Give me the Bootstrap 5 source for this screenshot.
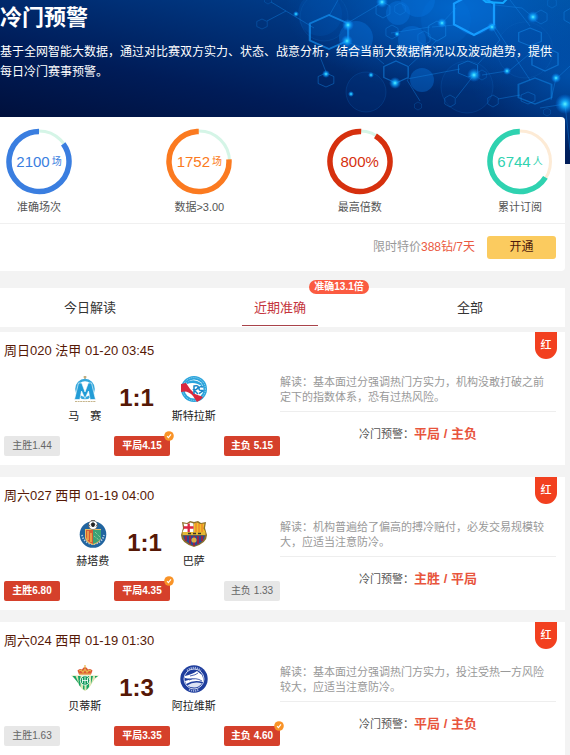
<!DOCTYPE html>
<html lang="zh-CN">
<head>
<meta charset="utf-8">
<meta name="viewport" content="width=device-width, initial-scale=1">
<title>冷门预警</title>
<link href="https://cdn.jsdelivr.net/npm/bootstrap@5.3.0/dist/css/bootstrap.min.css" rel="stylesheet">
<style>
body{background:#f3f3f3;font-family:"Liberation Sans","Noto Sans CJK SC",sans-serif;font-size:11px;line-height:15px;color:#333;overflow-x:hidden}
.hero{background:linear-gradient(12deg,#000c33 8%,#001c58 42%,#003a86 78%,#00529f);height:164px;color:#fff}
.hero-art{position:absolute;top:0;right:0;width:100%;height:100%}
.hero-body{position:relative;padding:4px 16px 0 0}
.hero h1{font-size:22px;line-height:28px;margin-bottom:10px}
.hero p{font-size:12px;line-height:20px;margin:0}
.page-body{position:relative;margin:-47px 5px 0 0}
.summary{border-radius:0 4px 4px 0}
.stats{padding:11px 11px 8px 5px;border-bottom:1px solid #f0f0f0}
.stat{width:68px}
.ring{position:relative;height:67px}
.ring svg{display:block;width:68px;height:67px}
.ring-value{position:absolute;inset:0;font-size:15px}
.ring-value small{font-size:10px;margin-left:2px}
.ring-blue{color:#3a7ee0}
.ring-orange{color:#fb7a20}
.ring-red{color:#d6300e}
.ring-green{color:#2fd2b0}
.stat-name{font-size:11px;line-height:16px;margin-top:4px;color:#555}
.offer{padding:12px 9px 12px 0;font-size:12px;color:#999;gap:12px}
.offer b{font-weight:400;color:#ea5a42}
.btn-open{background:#fbcb5f;color:#4e1a0c;font-size:12px;font-weight:400;line-height:23px;width:69px;padding:0;border:0;border-radius:3px}
.btn-open:hover{background:#f2bf4c}
.tabs{margin-top:17px;background:#fff}
.tabs .nav{margin-left:-5px}
.tabs .nav-link{position:relative;color:#333;font-size:13px;line-height:39px;padding:0}
.tabs .active{color:#c4343c}
.tabs .active::after{content:"";position:absolute;left:30%;right:30%;bottom:1px;height:1px;background:#a9434a}
.tab-tip{position:absolute;left:calc(50% + 29px);top:-8px;background:#fb5b41;color:#fff;font-size:10px;font-weight:700;line-height:14px;border-radius:7px;width:60px}
.matches{margin-top:5px;gap:12px}
.match{position:relative;background:#fff;padding:10px 9px 9px 4px}
.match h2{font-size:13px;font-weight:400;line-height:18px;margin-bottom:15px;color:#561806}
.flag{position:absolute;right:8px;top:0;width:22px;height:27px;line-height:27px;border-radius:0 0 11px 11px;background:#f2401f;color:#fff;font-weight:500}
.match-left{flex:0 0 276px}
.teams{gap:18px;margin-bottom:12px}
.team svg{display:block;width:28px;height:28px;margin:0 auto 6px}
.team{color:#222}
.score{font-size:24px;line-height:28px;font-weight:700;color:#561806;padding-top:9px}
.odd{position:relative;width:56px;border:0;border-radius:2px;background:#e7e7e7;color:#666;font-size:10px;line-height:20px;padding:0}
.odd.hit{background:#d5402b;color:#fff;font-weight:700}
.tick{position:absolute;right:-4px;top:-5px;width:10px;height:10px}
.note{color:#999;line-height:15px;padding:0 6px 6px 0;margin:0;border-bottom:1px solid #eee}
.verdict{margin:13px 0 0;line-height:18px;color:#555}
.verdict strong{font-size:13px;color:#e8553d}
</style>
</head>
<body>
<svg width="0" height="0" class="d-none" aria-hidden="true">
  <symbol id="tick" viewBox="0 0 10 10"><circle cx="5" cy="5" r="4.8" fill="#f99327"/><path d="M3 5.2l1.4 1.4L7 3.4" fill="none" stroke="#fff" stroke-width="1.1"/></symbol>
</svg>

<header class="hero position-relative overflow-hidden">
  <svg class="hero-art" viewBox="0 0 570 164" preserveAspectRatio="xMaxYMin slice" aria-hidden="true">
    <defs>
      <radialGradient id="glow"><stop offset="0" stop-color="#5ff4ff"/><stop offset=".3" stop-color="#16b5ff" stop-opacity=".9"/><stop offset="1" stop-color="#007bff" stop-opacity="0"/></radialGradient>
      <radialGradient id="haze"><stop offset="0" stop-color="#0068d0" stop-opacity=".85"/><stop offset="1" stop-color="#0058c0" stop-opacity="0"/></radialGradient>
      <path id="hex" d="M0-10L8.700-5V5L0 10L-8.700 5V-5Z"/>
    </defs>
    <ellipse cx="455" cy="8" rx="170" ry="84" fill="url(#haze)"/>
    <ellipse cx="570" cy="75" rx="100" ry="75" fill="url(#haze)" opacity=".6"/>
    <g fill="#0875e0" fill-opacity=".4">
      <circle cx="356" cy="38" r="17"/><circle cx="412" cy="40" r="14"/><circle cx="422" cy="80" r="12"/><circle cx="398" cy="13" r="12"/><circle cx="474" cy="15" r="20"/><circle cx="446" cy="20" r="25" fill-opacity=".16"/>
      <circle cx="320" cy="14" r="22" fill-opacity=".15"/><circle cx="418" cy="0" r="17"/>
    </g>
    <g fill="#004cad" fill-opacity=".14" stroke="#1069c0" stroke-opacity=".25"><circle cx="467" cy="87" r="26"/><circle cx="366" cy="92" r="20"/><circle cx="324" cy="17" r="24"/><circle cx="525" cy="50" r="28"/></g>
    <g fill="none" stroke="#1487e8" stroke-width="1" stroke-opacity=".55">
      <use href="#hex" transform="translate(383 10) scale(.8)"/><use href="#hex" transform="translate(400 9) scale(.6)"/><use href="#hex" transform="translate(392 32) scale(.7)"/><use href="#hex" transform="translate(437 31)"/><use href="#hex" transform="translate(424 38) scale(.7)"/>
      <use href="#hex" transform="translate(396 72) scale(1.4 1.1)"/><use href="#hex" transform="translate(326 80) scale(.9 .7)"/><use href="#hex" transform="translate(530 37) scale(1.3 .9)"/><use href="#hex" transform="translate(541 17) scale(.7)"/><use href="#hex" transform="translate(468 69) scale(1.100 .8)"/><use href="#hex" transform="translate(482 75) scale(.5)"/>
      <use href="#hex" transform="translate(528 98) scale(.8 .6)"/><use href="#hex" transform="translate(450 101) scale(.6)"/><use href="#hex" transform="translate(493 101) scale(.6)"/><use href="#hex" transform="translate(547 112) scale(.4)"/><use href="#hex" transform="translate(418 106) scale(.4)"/><use href="#hex" transform="translate(262 24) scale(.6 .5)"/><use href="#hex" transform="translate(268 0) scale(.4)"/><use href="#hex" transform="translate(545 59) scale(1.5 1.200)"/><use href="#hex" transform="translate(571 16) scale(.8)"/><use href="#hex" transform="translate(552 3) scale(.5)"/>
      <path stroke-opacity=".4" d="M267 21L286 11L271 2M286 11L314 28M329 16L338 0M346 24L383 2M347 42L366 49L384 64M315 44L326 72M391 33L430 27M442 23L456 8M492 27L500 40L478 64M495 5L522 8L533 17M510 0L530 26M409 66L436 41M455 25L432 27M407 79L460 69M509 71L540 45M556 78L551 100M520 95L498 99M482 75L507 71M555 80L570 66M495 27L530 80M456 98L474 75M420 101L407 80M540 108L565 104L570 150"/>
    </g>
    <g fill="none" stroke="#159cff" stroke-width="1"><use href="#hex" transform="translate(474 14) scale(2.300 2.100)"/><use href="#hex" transform="translate(329 32) scale(2.200 1.700)" stroke-opacity=".6"/><use href="#hex" transform="translate(535 91) scale(1.900 1.300)" stroke-opacity=".4"/></g>
    <path d="M474-8L486 2L503 3L509-3" stroke="#12a8ff" stroke-width="2" fill="none"/>
    <g fill="url(#glow)">
      <circle cx="348" cy="25" r="6"/><circle cx="347" cy="41" r="6"/><circle cx="382" cy="2" r="6"/><circle cx="442" cy="23" r="5"/><circle cx="492" cy="27" r="5"/><circle cx="533" cy="17" r="6"/><circle cx="326" cy="74" r="4"/><circle cx="371" cy="75" r="3"/><circle cx="351" cy="94" r="3"/><circle cx="395" cy="83" r="6"/><circle cx="474" cy="75" r="7"/><circle cx="507" cy="71" r="4"/><circle cx="556" cy="78" r="5"/><circle cx="565" cy="104" r="10"/><circle cx="397" cy="34" r="3"/><circle cx="296" cy="14" r="3"/>
    </g>
  </svg>
  <div class="hero-body">
    <h1 class="fw-bold">冷门预警</h1>
    <p>基于全网智能大数据，通过对比赛双方实力、状态、战意分析，结合当前大数据情况以及波动趋势，提供每日冷门赛事预警。</p>
  </div>
</header>

<main class="page-body">
  <section class="summary bg-white">
    <div class="stats d-flex justify-content-between text-center">
      <div class="stat">
        <div class="ring ring-blue"><svg viewBox="0 0 68 67"><circle cx="34" cy="33.500" r="30.500" fill="none" stroke="#d5f5e7" stroke-width="3"/><circle cx="34" cy="33.500" r="30" fill="none" stroke="currentColor" stroke-width="5.500" pathLength="100" stroke-dasharray="85 15" transform="rotate(-36 34 33.500)"/></svg><div class="ring-value d-flex align-items-center justify-content-center">2100<small>场</small></div></div>
        <div class="stat-name">准确场次</div>
      </div>
      <div class="stat">
        <div class="ring ring-orange"><svg viewBox="0 0 68 67"><circle cx="34" cy="33.500" r="30.500" fill="none" stroke="#d5f5e7" stroke-width="3"/><circle cx="34" cy="33.500" r="30" fill="none" stroke="currentColor" stroke-width="5.500" pathLength="100" stroke-dasharray="76 24" transform="rotate(-4 34 33.500)"/></svg><div class="ring-value d-flex align-items-center justify-content-center">1752<small>场</small></div></div>
        <div class="stat-name">数据&gt;3.00</div>
      </div>
      <div class="stat">
        <div class="ring ring-red"><svg viewBox="0 0 68 67"><circle cx="34" cy="33.500" r="30.500" fill="none" stroke="#d5f5e7" stroke-width="3"/><circle cx="34" cy="33.500" r="30" fill="none" stroke="currentColor" stroke-width="5.500" pathLength="100" stroke-dasharray="92 8" transform="rotate(-59 34 33.500)"/></svg><div class="ring-value d-flex align-items-center justify-content-center">800%</div></div>
        <div class="stat-name">最高倍数</div>
      </div>
      <div class="stat">
        <div class="ring ring-green"><svg viewBox="0 0 68 67"><circle cx="34" cy="33.500" r="30.500" fill="none" stroke="#fdebd6" stroke-width="3"/><circle cx="34" cy="33.500" r="30" fill="none" stroke="currentColor" stroke-width="5.500" pathLength="100" stroke-dasharray="66 34" transform="rotate(32 34 33.500)"/></svg><div class="ring-value d-flex align-items-center justify-content-center">6744<small>人</small></div></div>
        <div class="stat-name">累计订阅</div>
      </div>
    </div>
    <div class="offer d-flex justify-content-end align-items-center">
      <span>限时特价<b>388钻/7天</b></span>
      <button type="button" class="btn btn-open">开通</button>
    </div>
  </section>

  <nav class="tabs">
    <div class="nav nav-justified">
      <a class="nav-link nav-item" href="#today">今日解读</a>
      <a class="nav-link nav-item active" href="#recent" aria-current="page">近期准确<span class="tab-tip">准确13.1倍</span></a>
      <a class="nav-link nav-item" href="#all">全部</a>
    </div>
  </nav>

  <section class="matches d-flex flex-column" id="recent">
    <article class="match">
      <h2>周日020 法甲 01-20 03:45</h2>
      <span class="flag text-center">红</span>
      <div class="d-flex">
        <div class="match-left">
          <div class="teams d-flex justify-content-center text-center">
            <div class="team">
              <svg viewBox="0 0 28 28"><path d="M14 1v4M12.500 2h3" stroke="#b39a60" stroke-width="1.200"/><ellipse cx="14" cy="14" rx="8.600" ry="9" fill="none" stroke="#35a8dd" stroke-width="2.400"/><path d="M3.500 24.500L7.500 8h3.200L14 17l3.300-9h3.200l4 16.500h-5.300L17.500 16 14 23.500 10.500 16 8.800 24.500Z" fill="#229cd6" stroke="#fff" stroke-width=".6"/><path d="M4 26.500h21" stroke="#c6b58c" stroke-width="1.200" stroke-dasharray="2 .6"/></svg>
              马　赛
            </div>
            <div class="score">1:1</div>
            <div class="team">
              <svg viewBox="0 0 28 28"><circle cx="14" cy="14" r="13" fill="#2ba4dc"/><circle cx="14" cy="14" r="11.400" fill="none" stroke="#9cd7ef" stroke-width="1" stroke-dasharray="1 1"/><circle cx="14" cy="14" r="9.500" fill="#fff"/><path d="M1 9L6 8Q10 15 15 19L23 22Q21 25 17 27L13 21Q8 15 1 17Z" fill="#d9273d"/><path d="M7 7Q14 3 21 8L23 12Q15 6 7 9Z" fill="#2ba4dc"/><path d="M14 19V11q5-1 4 1.500T14 15l4 4M23 12q-4-1-4 1.500t3 2-3 3" fill="none" stroke="#1684c6" stroke-width="1.500"/></svg>
              斯特拉斯
            </div>
          </div>
          <div class="d-flex justify-content-between">
            <button type="button" class="odd">主胜1.44</button>
            <button type="button" class="odd hit">平局4.15<svg class="tick"><use href="#tick"/></svg></button>
            <button type="button" class="odd hit">主负 5.15</button>
          </div>
        </div>
        <div class="flex-grow-1">
          <p class="note">解读：基本面过分强调热门方实力，机构没敢打破之前定下的指数体系，恐有过热风险。</p>
          <p class="verdict d-flex justify-content-center">冷门预警：<strong>平局 / 主负</strong></p>
        </div>
      </div>
    </article>

    <article class="match">
      <h2>周六027 西甲 01-19 04:00</h2>
      <span class="flag text-center">红</span>
      <div class="d-flex">
        <div class="match-left">
          <div class="teams d-flex justify-content-center text-center">
            <div class="team">
              <svg viewBox="0 0 28 28"><circle cx="14" cy="14.500" r="13.300" fill="#21649f"/><path d="M3 15a11.200 11.200 0 0 0 22 0" fill="none" stroke="#b7d0e6" stroke-width="1.700" stroke-dasharray="1.400 1.300"/><path d="M6 9h16v9q-1 5-8 7-7-2-8-7Z" fill="#e9be61"/><path d="M7 10h7v14q-6-2-7-7Z" fill="#d65a36"/><path d="M14 10h8v7q-1 5-8 7Z" fill="#3ba175"/><path d="M9 11v9M12 13v9" stroke="#f2c454" stroke-width="1.300"/><path d="M16 12l5 5M15 16l5 4" stroke="#b9dfae" stroke-width=".9" stroke-dasharray="1 1"/><circle cx="14" cy="5" r="4.500" fill="#fff" stroke="#333" stroke-width=".5"/><path d="M12 4l2-1.500L16 4l-1 2.500h-2ZM9.800 4.500l1.200 2M18.200 4.500l-1.200 2M12 .8h4" fill="#222" stroke="#222" stroke-width=".7"/></svg>
              赫塔费
            </div>
            <div class="score">1:1</div>
            <div class="team">
              <svg viewBox="0 0 28 28"><path d="M2 2l5 1 3-2 4 1 4-1 3 2 5-1-1 6 2 7q0 8-13 12Q1 23 1 15l2-7Z" fill="#8b6f2b"/><path d="M3.500 3.500l4 .5 3-1.500 3 1V12h-11l2-4Z" fill="#fff"/><path d="M8.700 3.500V12M3.500 7.500h10" stroke="#dc2742" stroke-width="2.300"/><path d="M14 3.500l3-1 3 1.500 4.500-.5-1 5 2 3.500H14Z" fill="#f4bd2a"/><path d="M16 3v9M19 4v8M22 4v8" stroke="#e8702c" stroke-width="1"/><path d="M2.500 12h23v3H2.500Z" fill="#e4b734"/><path d="M8 13.500h3M13 13.500h3M18 13.500h3" stroke="#3d3524" stroke-width="1.500"/><path d="M3 15.500h22q-1 7-11 10.500Q4 22 3 15.500Z" fill="#294a94"/><path d="M6 16v5M10 16v8M14 16v10M18 16v8M22 16v5" stroke="#9d2244" stroke-width="1.900"/><circle cx="14" cy="20" r="2.600" fill="#d9ad45"/></svg>
              巴萨
            </div>
          </div>
          <div class="d-flex justify-content-between">
            <button type="button" class="odd hit">主胜6.80</button>
            <button type="button" class="odd hit">平局4.35<svg class="tick"><use href="#tick"/></svg></button>
            <button type="button" class="odd">主负 1.33</button>
          </div>
        </div>
        <div class="flex-grow-1">
          <p class="note">解读：机构普遍给了偏高的搏冷赔付，必发交易规模较大，应适当注意防冷。</p>
          <p class="verdict d-flex justify-content-center">冷门预警：<strong>主胜 / 平局</strong></p>
        </div>
      </div>
    </article>

    <article class="match">
      <h2>周六024 西甲 01-19 01:30</h2>
      <span class="flag text-center">红</span>
      <div class="d-flex">
        <div class="match-left">
          <div class="teams d-flex justify-content-center text-center">
            <div class="team">
              <svg viewBox="0 0 28 28"><path d="M0 10.500h28Q23 14 21 18q-2 5-7 8-5-3-7-8-2-4-7-7.500Z" fill="#dbe6b4"/><path d="M1.500 11h3l3.500 8ZM7 11h2.500v11L8 20ZM12 11h1.500v14l-1.500-1ZM15.500 11H18v11l-2.500 3ZM20 11h2l-2 8ZM24 11h3l-3 2Z" fill="#17a363"/><circle cx="14" cy="15.500" r="4.700" fill="#119a5a" stroke="#fff" stroke-width=".8"/><path d="M11.500 13v5M14 12v7M16.500 13v5M11 15.500h6" stroke="#fff" stroke-width=".8"/><path d="M8 9.500L6.500 5.500q2-2.500 4.500-1 1-2.500 3-2.500t3 2.500q2.500-1.500 4.500 1L20 9.500Z" fill="#db5935"/><path d="M8 9h12M8 6l2-.8 2 2 2-3 2 3 2-2 2 .8M14 0v3" fill="none" stroke="#e9b64a" stroke-width="1.200"/></svg>
              贝蒂斯
            </div>
            <div class="score">1:3</div>
            <div class="team">
              <svg viewBox="0 0 28 28"><circle cx="14" cy="14" r="13.700" fill="#1f3e9d"/><path d="M7 5.500Q14 0 21 5.500M9 24.500Q14 27 19 24.500" fill="none" stroke="#a6b5df" stroke-width="1.900" stroke-dasharray="1.200 .9"/><circle cx="14" cy="14" r="10" fill="none" stroke="#dce3f4" stroke-width=".9"/><path d="M5 11Q13 9 17 6L22 10Q24 14 23 17Q14 14 6 19L5 16Q12 14 16 13Q10 14 5 13Z" fill="#fff"/><path d="M7 20.500Q14 16 22 18.500Q18 23 14 22.500Q10 22.500 7 20.500Z" fill="#dce3f4"/><path d="M9 15Q16 12 22 16M10 11Q16 10 18 8" fill="none" stroke="#1f3e9d" stroke-width=".8"/></svg>
              阿拉维斯
            </div>
          </div>
          <div class="d-flex justify-content-between">
            <button type="button" class="odd">主胜1.63</button>
            <button type="button" class="odd hit">平局3.35</button>
            <button type="button" class="odd hit">主负 4.60<svg class="tick"><use href="#tick"/></svg></button>
          </div>
        </div>
        <div class="flex-grow-1">
          <p class="note">解读：基本面过分强调热门方实力，投注受热一方风险较大，应适当注意防冷。</p>
          <p class="verdict d-flex justify-content-center">冷门预警：<strong>平局 / 主负</strong></p>
        </div>
      </div>
    </article>
  </section>
</main>
<script src="https://cdn.jsdelivr.net/npm/bootstrap@5.3.0/dist/js/bootstrap.bundle.min.js"></script>
</body>
</html>
